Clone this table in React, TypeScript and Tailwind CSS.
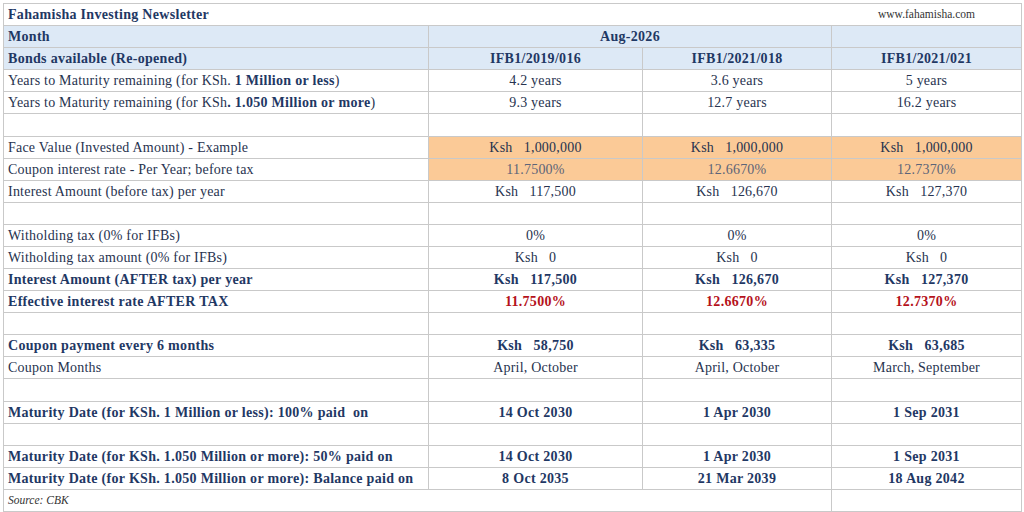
import React from "react";

type Cell = { t?: React.ReactNode; cls?: string };
type Row = {
  label?: React.ReactNode;
  bold?: boolean;
  cells?: [Cell, Cell, Cell];
  h?: string;
};

const B = "border-[#c9c9c9]";
const BOLD = "font-bold tracking-[0.3px] text-[#1f3864]";

const c = (t: React.ReactNode, cls = ""): Cell => ({ t, cls });
const ksh = (v: string) => `Ksh   ${v}`;

const empty: [Cell, Cell, Cell] = [c(""), c(""), c("")];

const rows: Row[] = [
  {
    label: (
      <>
        Years to Maturity remaining (for KSh. <b className={BOLD}>1 Million or less</b>)
      </>
    ),
    cells: [c("4.2 years"), c("3.6 years"), c("5 years")],
  },
  {
    label: (
      <>
        Years to Maturity remaining (for KSh<b className={BOLD}>. 1.050 Million or more</b>)
      </>
    ),
    cells: [c("9.3 years"), c("12.7 years"), c("16.2 years")],
  },
  { cells: empty, h: "h-[23px]" },
  {
    label: "Face Value (Invested Amount) - Example",
    cells: [
      c(ksh("1,000,000"), "bg-[#fbca97]"),
      c(ksh("1,000,000"), "bg-[#fbca97]"),
      c(ksh("1,000,000"), "bg-[#fbca97]"),
    ],
  },
  {
    label: "Coupon interest rate - Per Year; before tax",
    cells: [
      c("11.7500%", "bg-[#fbca97] text-[#5c6478]"),
      c("12.6670%", "bg-[#fbca97] text-[#5c6478]"),
      c("12.7370%", "bg-[#fbca97] text-[#5c6478]"),
    ],
  },
  {
    label: "Interest Amount (before tax) per year",
    cells: [c(ksh("117,500")), c(ksh("126,670")), c(ksh("127,370"))],
  },
  { cells: empty },
  {
    label: "Witholding tax (0% for IFBs)",
    cells: [c("0%"), c("0%"), c("0%")],
  },
  {
    label: "Witholding tax amount (0% for IFBs)",
    cells: [c(ksh("0")), c(ksh("0")), c(ksh("0"))],
  },
  {
    label: "Interest Amount (AFTER tax) per year",
    bold: true,
    cells: [c(ksh("117,500")), c(ksh("126,670")), c(ksh("127,370"))],
  },
  {
    label: "Effective interest rate AFTER TAX",
    bold: true,
    cells: [
      c("11.7500%", "text-[#b5121b]"),
      c("12.6670%", "text-[#b5121b]"),
      c("12.7370%", "text-[#b5121b]"),
    ],
  },
  { cells: empty },
  {
    label: "Coupon payment every 6 months",
    bold: true,
    cells: [c(ksh("58,750")), c(ksh("63,335")), c(ksh("63,685"))],
  },
  {
    label: "Coupon Months",
    cells: [c("April, October"), c("April, October"), c("March, September")],
  },
  { cells: empty, h: "h-[23px]" },
  {
    label: "Maturity Date (for KSh. 1 Million or less): 100% paid  on",
    bold: true,
    cells: [c("14 Oct 2030"), c("1 Apr 2030"), c("1 Sep 2031")],
  },
  { cells: empty },
  {
    label: "Maturity Date (for KSh. 1.050 Million or more): 50% paid on",
    bold: true,
    cells: [c("14 Oct 2030"), c("1 Apr 2030"), c("1 Sep 2031")],
  },
  {
    label: "Maturity Date (for KSh. 1.050 Million or more): Balance paid on",
    bold: true,
    cells: [c("8 Oct 2035"), c("21 Mar 2039"), c("18 Aug 2042")],
  },
];

export default function App() {
  return (
    <div
      className="w-[1024px] h-[512px] bg-white pl-[3px] pt-[3px] overflow-hidden text-[14px] tracking-[0.22px] leading-none text-[#27334f]"
      style={{ fontFamily: '"Liberation Serif", "Times New Roman", serif' }}
    >
      <div className={`w-[1019px] grid grid-cols-[425px_214px_189px_190px] border-l border-t ${B}`}>
        {/* Title row */}
        <div className={`col-span-3 h-[22px] border-b ${B} flex items-center pl-[4px] ${BOLD}`}>
          Fahamisha Investing Newsletter
        </div>
        <div className={`h-[22px] border-b border-r ${B} flex items-center justify-center text-[11.5px] tracking-normal text-[#333]`}>
          www.fahamisha.com
        </div>

        {/* Month row */}
        <div className={`h-[22px] border-b border-r ${B} bg-[#dde9f6] flex items-center pl-[4px] ${BOLD}`}>
          Month
        </div>
        <div className={`col-span-2 h-[22px] border-b border-r ${B} bg-[#dde9f6] flex items-center justify-center ${BOLD}`}>
          Aug-2026
        </div>
        <div className={`h-[22px] border-b border-r ${B} bg-[#dde9f6]`} />

        {/* Bonds row */}
        <div className={`h-[22px] border-b border-r ${B} bg-[#dde9f6] flex items-center pl-[4px] ${BOLD}`}>
          Bonds available (Re-opened)
        </div>
        {["IFB1/2019/016", "IFB1/2021/018", "IFB1/2021/021"].map((t) => (
          <div
            key={t}
            className={`h-[22px] border-b border-r ${B} bg-[#dde9f6] flex items-center justify-center ${BOLD}`}
          >
            {t}
          </div>
        ))}

        {rows.map((r, i) => {
          const h = r.h ?? "h-[22px]";
          const weight = r.bold ? BOLD : "";
          return (
            <React.Fragment key={i}>
              <div className={`${h} border-b border-r ${B} flex items-center pl-[4px] whitespace-pre ${weight}`}>
                {r.label ?? ""}
              </div>
              {(r.cells ?? empty).map((cell, j) => (
                <div
                  key={j}
                  className={`${h} border-b border-r ${B} flex items-center justify-center whitespace-pre ${weight} ${cell.cls ?? ""}`}
                >
                  {cell.t}
                </div>
              ))}
            </React.Fragment>
          );
        })}

        {/* Source row */}
        <div className={`col-span-3 h-[22px] border-b border-r ${B} flex items-center pl-[4px] italic text-[11.5px] tracking-normal text-[#333]`}>
          Source: CBK
        </div>
        <div className={`h-[22px] border-b border-r ${B}`} />
      </div>
    </div>
  );
}
